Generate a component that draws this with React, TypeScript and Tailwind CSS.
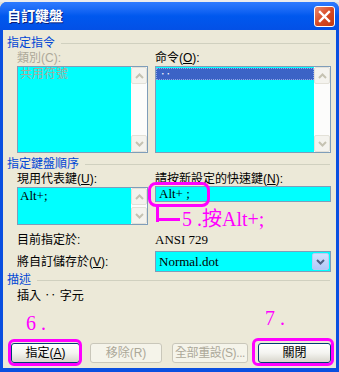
const ui = "font-['Liberation_Sans','Noto_Sans_CJK_TC',sans-serif]";
const latin = "font-['Liberation_Serif','Noto_Sans_CJK_TC',serif]";

function Chevron({ up = false, color = '#C5C2B2' }: { up?: boolean; color?: string }) {
  return (
    <svg width="9" height="6" viewBox="0 0 9 6">
      <path
        d={up ? 'M1 5 L4.5 1.5 L8 5' : 'M1 1 L4.5 4.5 L8 1'}
        fill="none"
        stroke={color}
        strokeWidth="2"
      />
    </svg>
  );
}

function ScrollBtn({ up = false }: { up?: boolean }) {
  return (
    <div className="h-[17px] w-[16px] flex items-center justify-center bg-[#F4F3EE] border border-[#E3E1D8] rounded-[2px]">
      <Chevron up={up} />
    </div>
  );
}

function ScrollBar() {
  return (
    <div className="w-[16px] flex flex-col justify-between bg-[#FCFCFB]">
      <ScrollBtn up />
      <ScrollBtn />
    </div>
  );
}

function GroupHeader({ title }: { title: string }) {
  return (
    <div className="flex items-center h-[16px] pl-[4px] pr-[6px]">
      <span className="text-[#0046D5] text-[12px] leading-[16px] mr-[6px]">{title}</span>
      <div className="flex-1 h-px bg-[#D0D0BF]" />
    </div>
  );
}

function Button({ children, disabled = false }: { children: React.ReactNode; disabled?: boolean }) {
  return (
    <div
      className={
        disabled
          ? 'h-[20px] flex items-center justify-center whitespace-nowrap rounded-[3px] border border-[#C9C7BA] bg-[#F5F4EA] text-[#ACA899] text-[12px]'
          : 'h-[20px] flex items-center justify-center whitespace-nowrap rounded-[3px] border border-[#003C74] bg-linear-to-b from-[#FFFFFF] via-[#F4F4F0] to-[#D8D6CC] text-black text-[12px]'
      }
    >
      {children}
    </div>
  );
}

export default function App() {
  return (
    <div className={`w-[339px] h-[372px] bg-[#E2E0DA] overflow-hidden ${ui}`}>
      <div className="h-[2px] bg-[#ECECEC]" />
      <div className="h-[370px] flex flex-col bg-[#0A4FE0] rounded-t-[7px] px-[3px] pb-[4px]">
        {/* title bar */}
        <div className="h-[28px] flex items-center justify-between bg-linear-to-b from-[#2E7BFF] via-[#0058EE] to-[#0350E6] -mx-[3px] pl-[7px] pr-[4px] rounded-t-[7px]">
          <span className="text-white font-bold text-[14px] leading-[16px] [text-shadow:1px_1px_0_#0A1E7A]">自訂鍵盤</span>
          <div className="w-[21px] h-[21px] rounded-[3px] border border-white bg-linear-to-br from-[#E9866A] via-[#D84A23] to-[#C13A12] flex items-center justify-center">
            <svg width="13" height="13" viewBox="0 0 13 13">
              <path d="M2 2 L11 11 M11 2 L2 11" stroke="white" strokeWidth="2.4" strokeLinecap="square" />
            </svg>
          </div>
        </div>

        {/* body */}
        <div className="relative flex-1 flex flex-col bg-[#ECE9D8] text-[12px] text-black">
          <div className="mt-[5px]">
            <GroupHeader title="指定指令" />
          </div>

          <div className="flex pl-[14px] gap-[7px]">
            <div className="w-[131px] flex flex-col">
              <div className="h-[15px] leading-[15px] text-[#ACA899]">類別(C):</div>
              <div className="h-[87px] flex border border-[#7F9DB9]">
                <div className="flex-1 bg-[#00FFFF] pl-[2px] pt-[1px] text-[#ACA899] leading-[13px]">共用符號</div>
                <ScrollBar />
              </div>
            </div>
            <div className="w-[176px] flex flex-col">
              <div className="h-[15px] leading-[15px]">命令(<u>O</u>):</div>
              <div className="h-[87px] flex border border-[#7F9DB9]">
                <div className="flex-1 bg-[#00FFFF] pt-[1px]">
                  <div className="h-[12px] bg-[#3B63C6] border border-dotted border-[#8FA8E8] text-white leading-[10px] pl-[3px] text-[11px]">‥</div>
                </div>
                <ScrollBar />
              </div>
            </div>
          </div>

          <div className="mt-[3px]">
            <GroupHeader title="指定鍵盤順序" />
          </div>

          <div className="flex pl-[14px] gap-[7px]">
            <div className="w-[131px] flex flex-col">
              <div className="h-[15px] leading-[15px]">現用代表鍵(<u>U</u>):</div>
              <div className="h-[38px] flex border border-[#7F9DB9]">
                <div className={`flex-1 bg-[#00FFFF] pl-[2px] pt-[1px] leading-[13px] text-[13px] ${latin}`}>Alt+;</div>
                <ScrollBar />
              </div>
            </div>
            <div className="w-[176px] flex flex-col">
              <div className="h-[14px] leading-[15px]">請按新設定的快速鍵(<u>N</u>):</div>
              <div className={`h-[16px] border border-[#7F9DB9] bg-[#00FFFF] pl-[3px] leading-[14px] text-[13px] ${latin}`}>
                Alt+ ;
              </div>
            </div>
          </div>

          <div className="flex pl-[14px] gap-[7px] mt-[7px] h-[16px] items-center">
            <div className="w-[131px]">目前指定於:</div>
            <div className={`text-[13px] ${latin}`}>ANSI 729</div>
          </div>

          <div className="flex pl-[14px] gap-[7px] mt-[3px] h-[21px] items-center">
            <div className="w-[131px]">將自訂儲存於(<u>V</u>):</div>
            <div className="w-[176px] h-[21px] flex border border-[#7F9DB9] bg-[#00FFFF]">
              <div className={`flex-1 pl-[3px] leading-[19px] text-[13px] ${latin}`}>Normal.dot</div>
              <div className="w-[17px] m-px rounded-[2px] bg-linear-to-b from-[#D5E1FD] to-[#B2C8F8] border border-[#B7CBF5] flex items-center justify-center">
                <Chevron color="#4D6185" />
              </div>
            </div>
          </div>

          <GroupHeader title="描述" />

          <div className="pl-[14px] h-[16px] leading-[16px]">插入 ‥ 字元</div>

          <div className="mt-auto mb-[5px] flex pl-[8px] gap-[10px]">
            <div className="w-[69px]">
              <Button>指定(<u>A</u>)</Button>
            </div>
            <div className="w-[72px]">
              <Button disabled>移除(R)</Button>
            </div>
            <div className="w-[76px]">
              <Button disabled>
                <span className="tracking-[-0.4px]">全部重設(S)...</span>
              </Button>
            </div>
            <div className="w-[73px]">
              <Button>關閉</Button>
            </div>
          </div>

          {/* annotations */}
          <div className="absolute left-[145px] top-[152px] w-[62px] h-[25px] border-[3px] border-[#FF00FF] rounded-[8px]" />
          <div className="absolute left-[153px] top-[177px] w-[3px] h-[15px] bg-[#FF00FF]" />
          <div className="absolute left-[153px] top-[188px] w-[24px] h-[3px] bg-[#FF00FF]" />
          <div className={`absolute left-[179px] top-[178px] text-[20px] leading-[22px] text-[#FF00FF] ${latin}`}>5 .按Alt+;</div>
          <div className={`absolute left-[23px] top-[282px] text-[20px] leading-[22px] text-[#FF00FF] ${latin}`}>6 .</div>
          <div className={`absolute left-[262px] top-[277px] text-[20px] leading-[22px] text-[#FF00FF] ${latin}`}>7 .</div>
          <div className="absolute left-[5px] top-[309px] w-[74px] h-[27px] border-[3px] border-[#FF00FF] rounded-[6px]" />
          <div className="absolute left-[249px] top-[308px] w-[82px] h-[28px] border-[3px] border-[#FF00FF] rounded-[6px]" />
        </div>
      </div>
    </div>
  );
}
